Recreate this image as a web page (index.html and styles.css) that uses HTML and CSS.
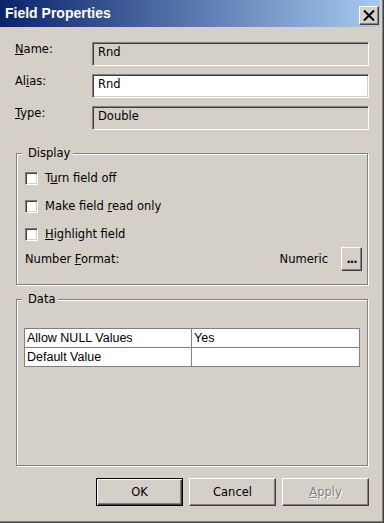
FILE: index.html
```html
<!DOCTYPE html>
<html>
<head>
<meta charset="utf-8">
<link rel="stylesheet" href="styles.css">
</head>
<body>
<div class="window">
  <div class="titlebar">
    <span class="title">Field Properties</span>
    <button class="close" aria-label="Close">
      <svg width="12" height="11" viewBox="0 0 12 11"><path d="M1 0.5 L11 10.5 M11 0.5 L1 10.5" stroke="#000" stroke-width="2" fill="none"/></svg>
    </button>
  </div>
  <div class="content">
    <div class="row"><span class="lbl"><u>N</u>ame:</span><div class="field ro">Rnd</div></div>
    <div class="row"><span class="lbl">Al<u>i</u>as:</span><div class="field">Rnd</div></div>
    <div class="row"><span class="lbl"><u>T</u>ype:</span><div class="field ro">Double</div></div>

    <fieldset class="group display">
      <legend>Display</legend>
      <div class="check"><span class="box"></span><span>T<u>u</u>rn field off</span></div>
      <div class="check"><span class="box"></span><span>Make field <u>r</u>ead only</span></div>
      <div class="check"><span class="box"></span><span><u>H</u>ighlight field</span></div>
      <div class="numfmt">
        <span class="nflabel">Number <u>F</u>ormat:</span>
        <span class="nfvalue">Numeric</span>
        <button class="btn dots">...</button>
      </div>
    </fieldset>

    <fieldset class="group data">
      <legend>Data</legend>
      <table class="grid">
        <tr><td class="c1">Allow NULL Values</td><td>Yes</td></tr>
        <tr><td class="c1">Default Value</td><td></td></tr>
      </table>
    </fieldset>

    <div class="buttons">
      <button class="btn push default">OK</button>
      <button class="btn push">Cancel</button>
      <button class="btn push disabled"><u>A</u>pply</button>
    </div>
  </div>
</div>
</body>
</html>
```
FILE: styles.css
```css
* { box-sizing: border-box; }
html, body { margin: 0; padding: 0; }
body {
  background: #d4d0c8;
  font-family: "DejaVu Sans", sans-serif;
  font-size: 11.5px;
  color: #000;
}
.window {
  width: 384px;
  height: 523px;
  background: #d4d0c8;
  border-right: 1px solid #404040;
  border-bottom: 1px solid #404040;
  box-shadow: inset -1px -1px 0 #808080;
  padding: 0 3px 3px 0;
}
.titlebar {
  height: 27px;
  background: linear-gradient(to right, #0a246a, #a6caf0);
  display: flex;
  align-items: flex-start;
  padding-left: 5px;
}
.title {
  font-family: "Liberation Sans", Arial, sans-serif;
  font-weight: bold;
  font-size: 14px;
  color: #fff;
  line-height: 27px;
  flex: 1;
}
.close {
  margin: 6px 1px 0 0;
  width: 20px;
  height: 19px;
  padding: 0;
  background: #d4d0c8;
  border: 1px solid;
  border-color: #fff #404040 #404040 #fff;
  box-shadow: inset -1px -1px 0 #808080;
  display: flex;
  align-items: center;
  justify-content: center;
}
.close svg { display: block; }
.content {
  padding: 15px 11px 0 15px;
}
.row {
  display: flex;
  height: 24px;
  margin-bottom: 8px;
}
.lbl {
  width: 77px;
  line-height: 14px;
  align-self: flex-start;
}
.field {
  width: 277px;
  height: 24px;
  padding: 0 5px;
  line-height: 19px;
  background: #fff;
  border: 1px solid;
  border-color: #808080 #fff #fff #808080;
  box-shadow: inset 1px 1px 0 #404040, inset -1px -1px 0 #d4d0c8;
}
.field.ro { background: #d4d0c8; }

.group {
  margin: 0 1px;
  min-width: 0;
  border: 1px solid #808080;
  box-shadow: 1px 1px 0 #fff, inset 1px 1px 0 #fff;
  padding: 4px 5px 13px 8px;
}
.group legend {
  line-height: 14px;
  padding: 0 3px 0 6px;
  margin-left: -3px;
  background: #d4d0c8;
}
.display { margin-top: 16px; }
.check {
  height: 28px;
  display: flex;
  align-items: center;
  gap: 7px;
}
.box {
  width: 13px;
  height: 13px;
  background: #fff;
  border: 1px solid;
  border-color: #808080 #fff #fff #808080;
  box-shadow: inset 1px 1px 0 #404040, inset -1px -1px 0 #d4d0c8;
}
.numfmt {
  height: 24px;
  margin-top: -1px;
  display: flex;
  align-items: center;
}
.nflabel { flex: 1; }
.nfvalue { margin-right: 13px; }
.btn {
  font-family: "DejaVu Sans", sans-serif;
  font-size: 11.5px;
  color: #000;
  background: #d4d0c8;
  border: 1px solid;
  border-color: #fff #404040 #404040 #fff;
  box-shadow: inset -1px -1px 0 #808080;
  padding: 0;
}
.dots {
  width: 21px;
  height: 24px;
  line-height: 20px;
  font-weight: bold;
  letter-spacing: -1px;
}
.data {
  margin-top: 7px;
  padding-top: 22px;
  padding-bottom: 98px;
}
.grid {
  margin-left: -1px;
  width: 336px;
  border-collapse: collapse;
  background: #fff;
  font-family: "Liberation Sans", Arial, sans-serif;
  font-size: 12.5px;
}
.grid td {
  border: 1px solid #808080;
  height: 19px;
  padding: 0 2px;
  line-height: 16px;
}
.grid td.c1 { width: 167px; }
.buttons {
  display: flex;
  justify-content: flex-end;
  gap: 6px;
  margin-top: 12px;
}
.push {
  width: 87px;
  height: 28px;
}
.push.default {
  border: 1px solid #000;
  box-shadow: inset 1px 1px 0 #fff, inset -1px -1px 0 #404040, inset -2px -2px 0 #808080;
}
.push.disabled {
  color: #808080;
  text-shadow: 1px 1px 0 #fff;
}
```
